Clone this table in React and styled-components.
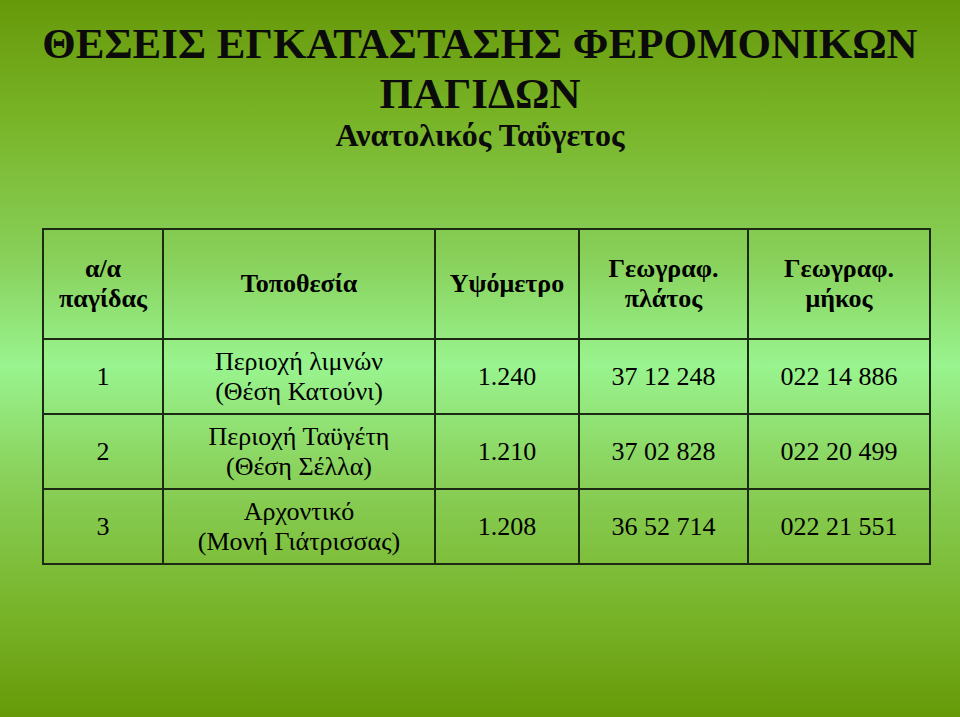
import React from 'react'
import styled, { createGlobalStyle } from 'styled-components'

const GlobalStyle = createGlobalStyle`
  html, body {
    margin: 0;
    padding: 0;
  }
  body {
    font-family: 'Liberation Serif', 'Times New Roman', serif;
    color: #000;
  }
`

const Page = styled.div`
  width: 960px;
  height: 717px;
  overflow: hidden;
  background: linear-gradient(
    to bottom,
    #66990a 0%,
    #78b326 16%,
    #88d05a 36%,
    #99f48f 51%,
    #8ad25c 66%,
    #78b42a 85%,
    #669a08 100%
  );
`

const Header = styled.header`
  padding-top: 19px;
  text-align: center;
`

const Title = styled.h1`
  margin: 0;
  font-size: 43px;
  line-height: 50px;
  font-weight: bold;
  color: #0b0b0b;
`

const Subtitle = styled.h2`
  margin: 0;
  font-size: 32px;
  line-height: 32px;
  font-weight: bold;
  color: #0b0b0b;
`

const Table = styled.table`
  margin: 77px 0 0 42px;
  width: 887px;
  border-collapse: collapse;
  table-layout: fixed;
`

const Cell = styled.td`
  border: 2px solid #1c2a14;
  padding: 0 4px;
  text-align: center;
  vertical-align: middle;
  font-size: 26px;
  line-height: 30px;
  font-weight: ${p => (p.head ? 'bold' : 'normal')};
  height: ${p => (p.head ? '108px' : '73px')};
`

const columns = [120, 272, 144, 169, 182]

const head = [
  ['α/α', 'παγίδας'],
  ['Τοποθεσία'],
  ['Υψόμετρο'],
  ['Γεωγραφ.', 'πλάτος'],
  ['Γεωγραφ.', 'μήκος'],
]

const rows = [
  ['1', ['Περιοχή λιμνών', '(Θέση Κατούνι)'], '1.240', '37 12 248', '022 14 886'],
  ['2', ['Περιοχή Ταϋγέτη', '(Θέση Σέλλα)'], '1.210', '37 02 828', '022 20 499'],
  ['3', ['Αρχοντικό', '(Μονή Γιάτρισσας)'], '1.208', '36 52 714', '022 21 551'],
]

const Lines = ({ lines }) =>
  (Array.isArray(lines) ? lines : [lines]).map((l, i) => (
    <React.Fragment key={i}>
      {i > 0 && <br />}
      {l}
    </React.Fragment>
  ))

export default function App() {
  return (
    <Page>
      <GlobalStyle />
      <Header>
        <Title>
          ΘΕΣΕΙΣ ΕΓΚΑΤΑΣΤΑΣΗΣ ΦΕΡΟΜΟΝΙΚΩΝ
          <br />
          ΠΑΓΙΔΩΝ
        </Title>
        <Subtitle>Ανατολικός Ταΰγετος</Subtitle>
      </Header>
      <Table>
        <colgroup>
          {columns.map((w, i) => (
            <col key={i} style={{ width: w }} />
          ))}
        </colgroup>
        <thead>
          <tr>
            {head.map((h, i) => (
              <Cell as="th" head key={i}>
                <Lines lines={h} />
              </Cell>
            ))}
          </tr>
        </thead>
        <tbody>
          {rows.map((r, ri) => (
            <tr key={ri}>
              {r.map((c, ci) => (
                <Cell key={ci}>
                  <Lines lines={c} />
                </Cell>
              ))}
            </tr>
          ))}
        </tbody>
      </Table>
    </Page>
  )
}
